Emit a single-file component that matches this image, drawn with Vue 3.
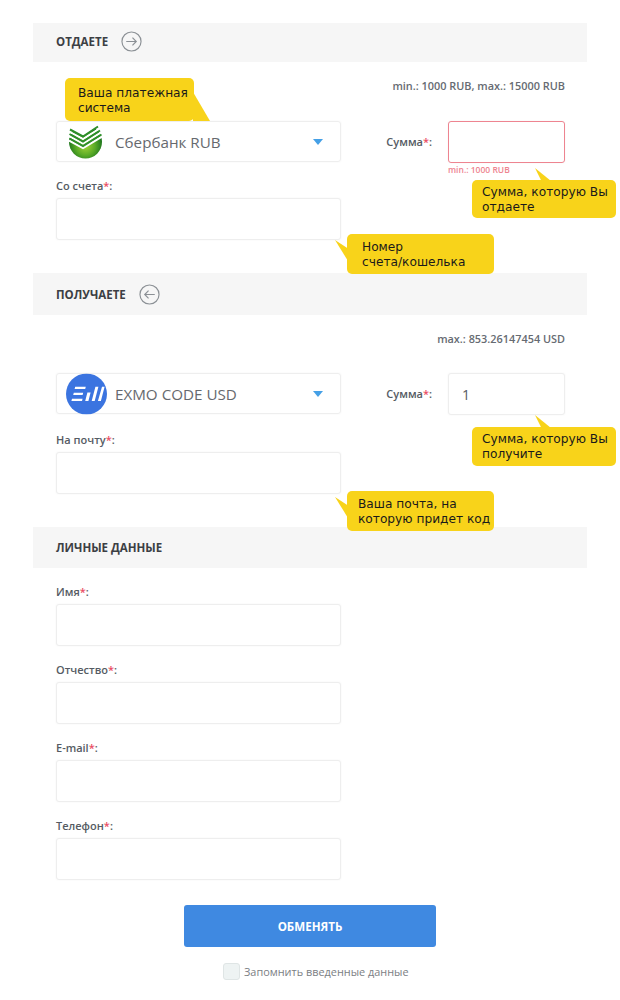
<template>
  <div class="page">
    <section class="head first">
      <span>ОТДАЕТЕ</span>
      <svg class="round-arrow" width="21" height="21" viewBox="0 0 22 22">
        <circle cx="11" cy="11" r="10" />
        <path d="M5.5 11h10.5M12 7l4 4-4 4" />
      </svg>
    </section>
    <p class="limits">min.: 1000 RUB, max.: 15000 RUB</p>
    <div class="pay-row">
      <div class="select">
        <svg class="logo" width="37" height="36" viewBox="0 0 37 36">
          <defs>
            <radialGradient id="sber" cx="50%" cy="62%" r="58%">
              <stop offset="0%" stop-color="#a2d437" />
              <stop offset="50%" stop-color="#5aab26" />
              <stop offset="100%" stop-color="#0c661b" />
            </radialGradient>
          </defs>
          <circle cx="18.5" cy="18" r="16.5" fill="url(#sber)" />
          <path d="M3 5.5 L16 12 L31 2 V0 H3 Z" fill="#fff" />
          <path d="M2 7.5 L16 15 L33 4.5 M2 12 L16 19.5 L34 8.5 M2 16.5 L16 24 L35 12.5" fill="none" stroke="#fff" stroke-width="2.2" />
          <path d="M3 5.5 L16 12.5 L31 2.5 M2.5 10 L16 17.5 L33 6.5 M2.5 14.5 L16 22 L34.5 10.5" fill="none" stroke="#2f8f2a" stroke-width="2" />
        </svg>
        <span class="select-name">Сбербанк RUB</span>
        <i class="caret"></i>
      </div>
      <label class="sum-label">Сумма<b>*</b>:</label>
      <div class="sum-box">
        <input class="input error" type="text" />
        <small class="err">min.: 1000 RUB</small>
      </div>
    </div>
    <div class="field from">
      <label>Со счета<b>*</b>:</label>
      <input class="input" type="text" />
    </div>

    <section class="head second">
      <span>ПОЛУЧАЕТЕ</span>
      <svg class="round-arrow" width="21" height="21" viewBox="0 0 22 22">
        <circle cx="11" cy="11" r="10" />
        <path d="M16.5 11H6M10 7l-4 4 4 4" />
      </svg>
    </section>
    <p class="limits">max.: 853.26147454 USD</p>
    <div class="pay-row">
      <div class="select">
        <svg class="logo exmo" width="41" height="41" viewBox="0 0 41 41">
          <circle cx="20.5" cy="20.5" r="20.5" fill="#3b74e0" />
          <path d="M9.2 13.2h10.6l-.6 2.4H8.6zM7.8 19.2h9.4l-.6 2.4H7.2zM6 25.2h10.6l-.6 2.4H5.4z" fill="#fff" />
          <path d="M21.4 19h3.2l-2.2 8.6h-3.2zM29.4 13.2h3l-3.7 14.4h-3zM36 13.2h2.6l-3.7 14.4h-3z" fill="#fff" />
        </svg>
        <span class="select-name">EXMO CODE USD</span>
        <i class="caret"></i>
      </div>
      <label class="sum-label">Сумма<b>*</b>:</label>
      <div class="sum-box">
        <input class="input value" type="text" value="1" />
      </div>
    </div>
    <div class="field to">
      <label>На почту<b>*</b>:</label>
      <input class="input" type="text" />
    </div>

    <section class="head third">
      <span>ЛИЧНЫЕ ДАННЫЕ</span>
    </section>
    <div class="personal">
      <div v-for="name in personal" :key="name" class="field">
        <label>{{ name }}<b>*</b>:</label>
        <input class="input" type="text" />
      </div>
    </div>

    <button class="submit" type="button">ОБМЕНЯТЬ</button>
    <div class="remember">
      <input class="check" type="checkbox" />
      <span>Запомнить введенные данные</span>
    </div>

    <div v-for="tip in tips" :key="tip.id" class="tip" :class="tip.id">{{ tip.text }}</div>
  </div>
</template>

<script setup>
const personal = ['Имя', 'Отчество', 'E-mail', 'Телефон']

const tips = [
  { id: 'tip-system', text: 'Ваша платежная\nсистема' },
  { id: 'tip-give', text: 'Сумма, которую Вы\nотдаете' },
  { id: 'tip-account', text: 'Номер\nсчета/кошелька' },
  { id: 'tip-get', text: 'Сумма, которую Вы\nполучите' },
  { id: 'tip-mail', text: 'Ваша почта, на\nкоторую придет код' }
]
</script>

<style>
body {
  background: #fff;
}
</style>

<style scoped>
.page {
  position: relative;
  width: 620px;
  height: 1000px;
  box-sizing: border-box;
  padding-top: 23px;
  overflow: hidden;
  font-family: "Open Sans", sans-serif;
  color: #555b63;
}
.head {
  display: flex;
  align-items: center;
  gap: 13px;
  width: 554px;
  height: 39px;
  margin-left: 33px;
  padding-left: 23px;
  box-sizing: border-box;
  background: #f6f6f6;
  font-size: 11.5px;
  font-weight: 700;
  color: #3c3f44;
}
.head.first span,
.head.first svg {
  margin-top: -2px;
}
.head.second {
  height: 42px;
  margin-top: 33px;
}
.head.third {
  height: 41px;
  margin-top: 33px;
}
.round-arrow {
  fill: none;
  stroke: #8b9095;
  stroke-width: 1.2;
}
.limits {
  margin: 16px 55px 0 0;
  height: 16px;
  line-height: 16px;
  font-size: 10.9px;
  font-weight: 600;
  text-align: right;
  color: #666b72;
}
.pay-row {
  display: flex;
  align-items: flex-start;
  height: 41px;
  margin: 27px 0 0 56px;
}
.second ~ .pay-row {
  margin-top: 26px;
}
.select {
  position: relative;
  display: flex;
  align-items: center;
  width: 285px;
  height: 41px;
  box-sizing: border-box;
  border: 1px solid #eee;
  border-radius: 3px;
  box-shadow: 0 0 2px rgba(0, 0, 0, 0.05);
}
.logo {
  position: absolute;
  left: 10px;
  top: 50%;
  transform: translateY(-50%);
}
.logo.exmo {
  left: 9px;
}
.select-name {
  margin-left: 58px;
  font-size: 15.2px;
  color: #66696e;
}
.caret {
  position: absolute;
  right: 17px;
  top: 17px;
  border-left: 5.5px solid transparent;
  border-right: 5.5px solid transparent;
  border-top: 6px solid #45a0e6;
}
.sum-label {
  width: 91px;
  margin-right: 16px;
  height: 41px;
  line-height: 41px;
  font-size: 11px;
  font-weight: 600;
  text-align: right;
}
.sum-label b,
.field b {
  color: #ea4d63;
  font-weight: 600;
}
.sum-box {
  width: 117px;
}
.input {
  display: block;
  width: 100%;
  height: 42px;
  box-sizing: border-box;
  border: 1px solid #eee;
  border-radius: 3px;
  box-shadow: 0 0 2px rgba(0, 0, 0, 0.05);
  outline: none;
  background: #fff;
  font-family: inherit;
  color: #555b63;
}
.input.error {
  border-color: #ee8490;
}
.input.value {
  padding-left: 13px;
  font-size: 14px;
}
.err {
  display: block;
  height: 14px;
  line-height: 14px;
  font-size: 8.5px;
  font-weight: 600;
  color: #ee8490;
}
.field {
  width: 285px;
  margin-left: 56px;
}
.field label {
  display: block;
  height: 16px;
  margin-bottom: 4px;
  line-height: 16px;
  font-size: 11px;
  font-weight: 600;
}
.field.from {
  margin-top: 16px;
}
.field.to {
  margin-top: 18px;
}
.personal {
  display: flex;
  flex-direction: column;
  gap: 16px;
  margin-top: 16px;
}
.submit {
  display: block;
  width: 252px;
  height: 42px;
  margin: 25px 0 0 184px;
  border: none;
  border-radius: 3px;
  background: #3f89e1;
  color: #fff;
  font-family: inherit;
  font-size: 11.6px;
  font-weight: 700;
}
.remember {
  display: flex;
  align-items: center;
  gap: 4px;
  margin: 16px 0 0 223px;
  font-size: 10.9px;
  color: #7a7e83;
}
.check {
  appearance: none;
  width: 17px;
  height: 17px;
  margin: 0;
  border: 1px solid #dfe5e5;
  border-radius: 3px;
  background: #eef3f3;
}
/* hints lie over the form */
.tip {
  position: absolute;
  box-sizing: border-box;
  border-radius: 5px;
  background: #f8d31a;
  font-family: "DejaVu Sans", sans-serif;
  font-size: 12.2px;
  line-height: 14.5px;
  color: #1a1a1a;
  white-space: pre-line;
}
.tip::after {
  content: "";
  position: absolute;
  background: #f8d31a;
}
.tip-system {
  left: 65px;
  top: 78px;
  width: 129px;
  height: 43px;
  padding: 8px 0 0 13px;
}
.tip-system::after {
  left: 128px;
  top: 14px;
  width: 17px;
  height: 29px;
  clip-path: polygon(0 0, 100% 100%, 0 100%);
}
.tip-give,
.tip-get {
  left: 472px;
  width: 144px;
  padding: 5px 0 0 10px;
}
.tip-give {
  top: 180px;
  height: 38px;
}
.tip-get {
  top: 427px;
  height: 39px;
}
.tip-give::after,
.tip-get::after {
  left: 63px;
  top: -12px;
  width: 16px;
  height: 13px;
  clip-path: polygon(0 0, 100% 100%, 40% 100%);
}
.tip-account,
.tip-mail {
  left: 347px;
  width: 147px;
  height: 40px;
}
.tip-account {
  top: 234px;
  padding: 6px 0 0 15px;
}
.tip-mail {
  top: 491px;
  padding: 6px 0 0 11px;
}
.tip-account::after,
.tip-mail::after {
  left: -12px;
  top: 6px;
  width: 13px;
  height: 21px;
  clip-path: polygon(0 0, 100% 40%, 100% 100%);
}
</style>
